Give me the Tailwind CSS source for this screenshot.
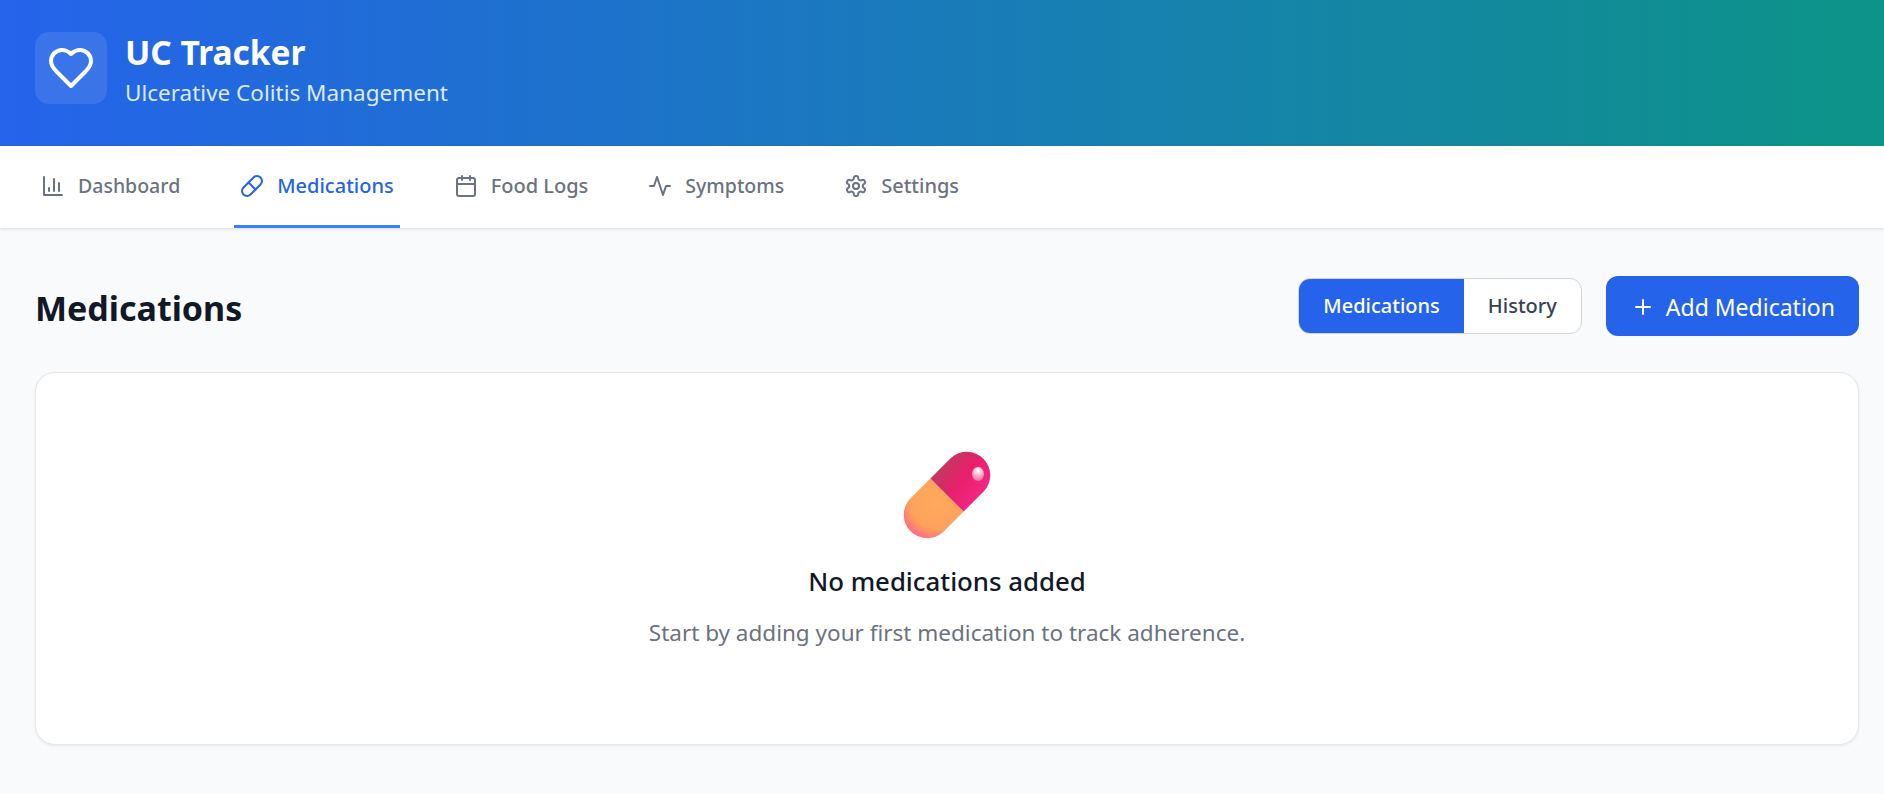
<!DOCTYPE html>
<html lang="en">
<head>
  <meta charset="UTF-8" />
  <meta name="viewport" content="width=device-width, initial-scale=1.0" />
  <title>UC Tracker</title>
  <script src="https://cdn.jsdelivr.net/npm/@tailwindcss/browser@4"></script>
</head>
<body class="bg-[#f9fafb] min-h-screen font-['Noto_Sans',sans-serif] text-[#111827]">

  <!-- Header -->
  <header class="h-[146px] px-[35px] pt-[32px] bg-[linear-gradient(to_right,#2563eb,#0d9488)]">
    <div class="flex items-center gap-[18px]">
      <div class="w-[72px] h-[72px] rounded-[14px] bg-white/10 flex items-center justify-center">
        <svg class="w-[48px] h-[48px]" viewBox="0 0 24 24" fill="none" stroke="white" stroke-width="2" stroke-linecap="round" stroke-linejoin="round">
          <path d="M19 14c1.49-1.46 3-3.21 3-5.5A5.5 5.5 0 0 0 16.5 3c-1.76 0-3 .5-4.5 2-1.5-1.5-2.74-2-4.5-2A5.5 5.5 0 0 0 2 8.5c0 2.3 1.5 4.05 3 5.5l7 7Z"/>
        </svg>
      </div>
      <div>
        <h1 class="text-[33.5px] leading-[40px] font-bold text-white">UC Tracker</h1>
        <p class="text-[22.5px] leading-[22px] mt-[10px] text-[#dbeafe]">Ulcerative Colitis Management</p>
      </div>
    </div>
  </header>

  <!-- Tabs -->
  <nav class="h-[82px] bg-white shadow-[0_1px_3px_rgba(0,0,0,0.12)] pl-[35px] flex gap-[48px] text-[20px] font-medium text-[#6b7280]">
    <a class="flex items-center gap-[13px] px-[6px] pb-[3px] text-[19.5px]">
      <svg class="w-[24px] h-[24px]" viewBox="0 0 24 24" fill="none" stroke="currentColor" stroke-width="2" stroke-linecap="round" stroke-linejoin="round">
        <path d="M3 3v18h18"/><path d="M8 17v-3"/><path d="M13 17V5"/><path d="M18 17V9"/>
      </svg>
      Dashboard
    </a>
    <a class="flex items-center gap-[13px] px-[6px] text-[#2563eb] border-b-[3px] border-[#3b82f6]">
      <svg class="w-[24px] h-[24px]" viewBox="0 0 24 24" fill="none" stroke="currentColor" stroke-width="2" stroke-linecap="round" stroke-linejoin="round">
        <path d="m10.5 20.5 10-10a4.95 4.95 0 1 0-7-7l-10 10a4.95 4.95 0 1 0 7 7Z"/><path d="m8.5 8.5 7 7"/>
      </svg>
      Medications
    </a>
    <a class="flex items-center gap-[13px] px-[6px] pb-[3px]">
      <svg class="w-[24px] h-[24px]" viewBox="0 0 24 24" fill="none" stroke="currentColor" stroke-width="2" stroke-linecap="round" stroke-linejoin="round">
        <path d="M8 2v4"/><path d="M16 2v4"/><rect x="3" y="4" width="18" height="18" rx="2"/><path d="M3 10h18"/>
      </svg>
      Food Logs
    </a>
    <a class="flex items-center gap-[13px] px-[6px] pb-[3px] text-[19.5px]">
      <svg class="w-[24px] h-[24px]" viewBox="0 0 24 24" fill="none" stroke="currentColor" stroke-width="2" stroke-linecap="round" stroke-linejoin="round">
        <path d="M22 12h-4l-3 9L9 3l-3 9H2"/>
      </svg>
      Symptoms
    </a>
    <a class="flex items-center gap-[13px] px-[6px] pb-[3px]">
      <svg class="w-[24px] h-[24px]" viewBox="0 0 24 24" fill="none" stroke="currentColor" stroke-width="2" stroke-linecap="round" stroke-linejoin="round">
        <path d="M12.22 2h-.44a2 2 0 0 0-2 2v.18a2 2 0 0 1-1 1.73l-.43.25a2 2 0 0 1-2 0l-.15-.08a2 2 0 0 0-2.73.73l-.22.38a2 2 0 0 0 .73 2.73l.15.1a2 2 0 0 1 1 1.72v.51a2 2 0 0 1-1 1.74l-.15.09a2 2 0 0 0-.73 2.73l.22.38a2 2 0 0 0 2.73.73l.15-.08a2 2 0 0 1 2 0l.43.25a2 2 0 0 1 1 1.73V20a2 2 0 0 0 2 2h.44a2 2 0 0 0 2-2v-.18a2 2 0 0 1 1-1.73l.43-.25a2 2 0 0 1 2 0l.15.08a2 2 0 0 0 2.73-.73l.22-.39a2 2 0 0 0-.73-2.73l-.15-.08a2 2 0 0 1-1-1.74v-.5a2 2 0 0 1 1-1.74l.15-.09a2 2 0 0 0 .73-2.73l-.22-.38a2 2 0 0 0-2.73-.73l-.15.08a2 2 0 0 1-2 0l-.43-.25a2 2 0 0 1-1-1.73V4a2 2 0 0 0-2-2z"/><circle cx="12" cy="12" r="3"/>
      </svg>
      Settings
    </a>
  </nav>

  <main class="pl-[35px] pr-[25px] pt-[48px]">
    <div class="flex items-start justify-between mb-[35px]">
      <h2 class="mt-[3px] text-[34px] leading-[58px] font-bold text-[#111827]">Medications</h2>
      <div class="flex items-center gap-[24px]">
        <div class="flex rounded-[12px] border border-[#d1d5db] overflow-hidden bg-white text-[20px] font-medium h-[56px]">
          <button class="px-[24px] bg-[#2563eb] text-white">Medications</button>
          <button class="px-[24px] text-[#374151]">History</button>
        </div>
        <button class="flex items-center gap-[11px] h-[60px] pl-[25px] pr-[24px] pt-[2px] rounded-[12px] bg-[#2563eb] text-white text-[23px]">
          <svg class="w-[24px] h-[24px]" viewBox="0 0 24 24" fill="none" stroke="currentColor" stroke-width="2" stroke-linecap="round" stroke-linejoin="round">
            <path d="M5 12h14"/><path d="M12 5v14"/>
          </svg>
          Add Medication
        </button>
      </div>
    </div>

    <!-- Empty state -->
    <section class="h-[373px] rounded-[20px] bg-white border border-[#e5e7eb] shadow-[0_1px_3px_rgba(0,0,0,0.08)] flex flex-col items-center pt-[78px]">
      <svg class="w-[88px] h-[88px]" viewBox="0 0 88 88">
        <defs>
          <linearGradient id="pinkHalf" x1="0.1" y1="0.2" x2="0.9" y2="0.8">
            <stop offset="0" stop-color="#b93d60"/>
            <stop offset="0.5" stop-color="#e8206a"/>
            <stop offset="1" stop-color="#f7278a"/>
          </linearGradient>
          <radialGradient id="orangeHalf" cx="0.55" cy="0.4" r="0.75">
            <stop offset="0" stop-color="#ffaa5c"/>
            <stop offset="0.6" stop-color="#fda25c"/>
            <stop offset="1" stop-color="#fb4f96"/>
          </radialGradient>
          <radialGradient id="shine" cx="0.5" cy="0.25" r="0.8">
            <stop offset="0" stop-color="#ffffff"/>
            <stop offset="1" stop-color="#f7609c"/>
          </radialGradient>
        </defs>
        <path d="M27.4 27.4 L6.9 47.9 A23.5 23.5 0 0 0 40.1 81.1 L60.6 60.6 Z" fill="url(#orangeHalf)"/>
        <path d="M27.4 27.4 L47.9 6.9 A23.5 23.5 0 0 1 81.1 40.1 L60.6 60.6 Z" fill="url(#pinkHalf)"/>
        <ellipse cx="75" cy="23" rx="6" ry="7" fill="url(#shine)"/>
      </svg>
      <h3 class="mt-[25px] text-[25.8px] leading-[34px] font-medium text-[#111827]">No medications added</h3>
      <p class="mt-[20px] text-[22.5px] leading-[30px] text-[#6b7280]">Start by adding your first medication to track adherence.</p>
    </section>
  </main>

</body>
</html>
